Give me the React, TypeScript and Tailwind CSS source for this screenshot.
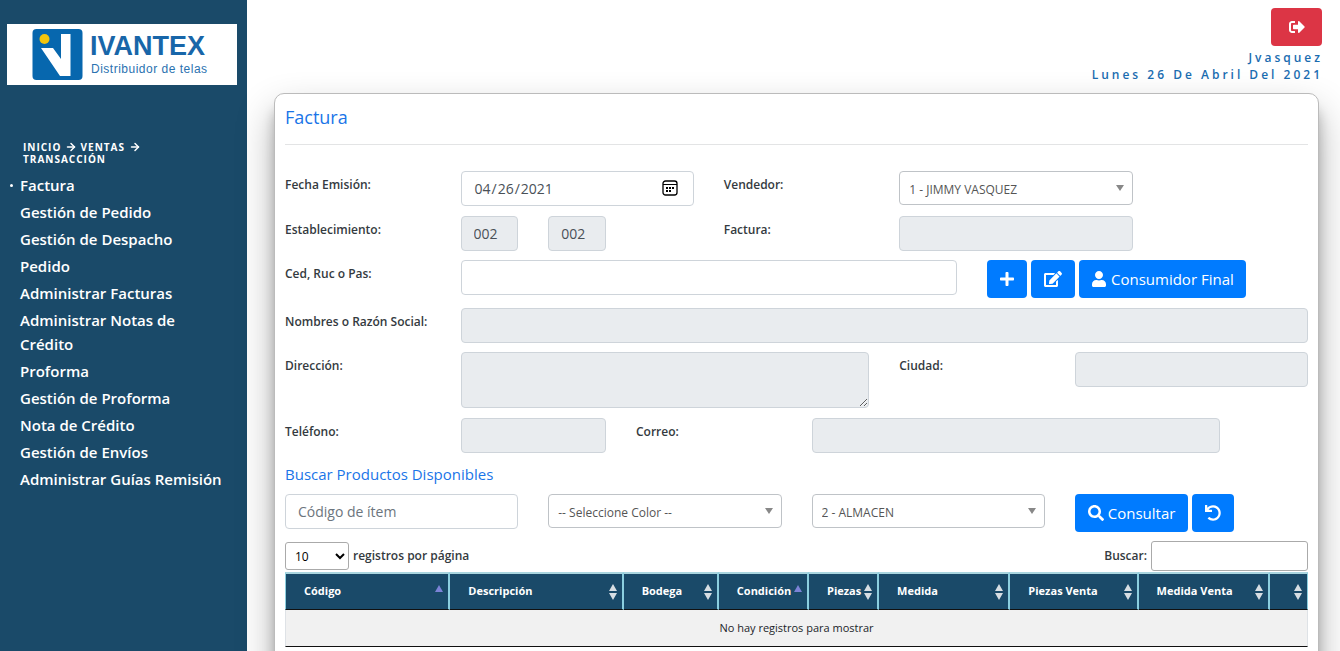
import { useState } from "react";
import type { ReactNode } from "react";
import { FaEdit, FaPlus, FaSearch, FaSignOutAlt, FaUndo, FaUser } from "react-icons/fa";
import { ArrowRight } from "lucide-react";
import clsx from "clsx";

const MENU = [
  "Factura",
  "Gestión de Pedido",
  "Gestión de Despacho",
  "Pedido",
  "Administrar Facturas",
  "Administrar Notas de Crédito",
  "Proforma",
  "Gestión de Proforma",
  "Nota de Crédito",
  "Gestión de Envíos",
  "Administrar Guías Remisión",
];

type Sort = "asc" | "both";

const COLUMNS: { label: string; width: string; sort: Sort }[] = [
  { label: "Código", width: "w-[165px]", sort: "asc" },
  { label: "Descripción", width: "w-[173px]", sort: "both" },
  { label: "Bodega", width: "w-[95px]", sort: "both" },
  { label: "Condición", width: "w-[90px]", sort: "asc" },
  { label: "Piezas", width: "w-[70px]", sort: "both" },
  { label: "Medida", width: "w-[131px]", sort: "both" },
  { label: "Piezas Venta", width: "w-[128px]", sort: "both" },
  { label: "Medida Venta", width: "w-[131px]", sort: "both" },
  { label: "", width: "w-[38px]", sort: "both" },
];

const field =
  "block h-[35px] w-full rounded border border-[#ced4da] bg-white px-3 text-sm text-[#495057] placeholder:text-[#6c757d] disabled:bg-[#e9ecef] disabled:opacity-100";
const button =
  "inline-flex h-[38px] items-center justify-center gap-1 rounded bg-[#007bff] text-[15px] text-white hover:bg-[#0069d9]";

function Logo() {
  return (
    <svg viewBox="0 0 230 61" className="block w-full bg-white" role="img" aria-label="Ivantex">
      <rect x="25.500" y="5" width="50" height="51" rx="4" fill="#0767ae" />
      <path d="M34 24 L46 24 L54 35 L54 10 L63.500 10 L63.500 52 L53 52 Z" fill="#fff" />
      <circle cx="37.500" cy="15" r="5" fill="#f3c50c" />
      <text x="83" y="31" fontSize="27" fontWeight="700" fontFamily="Liberation Sans, Arial, sans-serif" fill="#1866a9">
        IVANTEX
      </text>
      <text x="84" y="49" fontSize="12" fontFamily="Liberation Sans, Arial, sans-serif" letterSpacing="0.5" fill="#2a72b0">
        Distribuidor de telas
      </text>
    </svg>
  );
}

function Sidebar() {
  return (
    <aside className="w-[247px] shrink-0 bg-[#1a4a69] text-white">
      <div className="pt-6 pr-[10px] pl-[7px]">
        <Logo />
      </div>
      <nav>
        <div className="mt-14 px-[23px] text-[10px] leading-3 font-bold tracking-[1px] uppercase">
          Inicio <ArrowRight className="inline h-3 w-3 align-[-2px]" strokeWidth={3} /> Ventas{" "}
          <ArrowRight className="inline h-3 w-3 align-[-2px]" strokeWidth={3} /> Transacción
        </div>
        <ul className="mt-2 px-5">
          {MENU.map((item, i) => (
            <li key={item} className="relative mb-[3px] text-[15px] leading-6 font-semibold">
              {i === 0 && <span className="absolute top-[11px] -left-[10px] h-[3px] w-[3px] rounded-full bg-white" />}
              <a href="#">{item}</a>
            </li>
          ))}
        </ul>
      </nav>
    </aside>
  );
}

function Label({ htmlFor, className, children }: { htmlFor: string; className?: string; children: ReactNode }) {
  return (
    <label
      htmlFor={htmlFor}
      className={clsx("pt-1 text-xs leading-5 font-semibold whitespace-nowrap text-[#343a40]", className)}
    >
      {children}
    </label>
  );
}

function CalendarIcon() {
  return (
    <svg viewBox="0 0 16 16" className="pointer-events-none absolute top-[9px] right-4 h-4 w-4" fill="none" stroke="#000">
      <rect x="1" y="1" width="14" height="14" rx="2.500" strokeWidth="1.300" />
      <path d="M1 4.500h14" />
      <path d="M4 8h2M7 8h2M10 8h2M4 11h2M7 11h2" strokeWidth="2" />
    </svg>
  );
}

function Dropdown({ label, options }: { label: string; options: string[] }) {
  return (
    <div className="relative">
      <select
        id={label}
        aria-label={label}
        className="block h-[34px] w-full appearance-none rounded border border-[#bfc3c7] bg-white pt-[3px] pr-6 pl-[9px] text-xs text-[#555]"
      >
        {options.map((o) => (
          <option key={o}>{o}</option>
        ))}
      </select>
      <svg viewBox="0 0 8 6" className="pointer-events-none absolute top-[14px] right-[9px] h-[6px] w-2" fill="#888">
        <path d="M0 0h8L4 6z" />
      </svg>
    </div>
  );
}

function SortIcon({ sort }: { sort: Sort }) {
  return (
    <svg viewBox="0 0 8 16" className="absolute top-[10px] right-[5px] h-4 w-2">
      {sort === "asc" ? (
        <path d="M0 8L4 1l4 7z" fill="#7c83d6" />
      ) : (
        <path d="M0 7L4 0l4 7zM0 9h8l-4 7z" fill="#d7dee3" />
      )}
    </svg>
  );
}

function Row({ className, children }: { className?: string; children: ReactNode }) {
  return <div className={clsx("grid grid-cols-12 gap-x-[30px]", className)}>{children}</div>;
}

function ProductTable() {
  return (
    <table className="w-full table-fixed border-separate border-spacing-0">
      <thead>
        <tr className="h-[38px] bg-[#1a4a69] text-left text-[11px] text-white">
          {COLUMNS.map((c, i) => (
            <th
              key={i}
              aria-label={c.label || "Acciones"}
              className={clsx(
                "relative border-t-2 border-r-2 border-b border-t-[#a9d5df] border-r-[#8ccfdf] border-b-[#111] p-0 pl-[18px] font-bold whitespace-nowrap first:border-l first:border-l-[#8ccfdf] last:border-r",
                c.width,
              )}
            >
              {c.label}
              <SortIcon sort={c.sort} />
            </th>
          ))}
        </tr>
      </thead>
      <tbody>
        <tr className="h-[37px] bg-[#f1f1f1] text-center text-[11px] text-[#212529]">
          <td colSpan={COLUMNS.length} className="border-x border-b border-x-[#dee2e6] border-b-[#111] p-0">
            No hay registros para mostrar
          </td>
        </tr>
      </tbody>
    </table>
  );
}

export default function App() {
  const [date, setDate] = useState("2021-04-26");

  return (
    <div className="flex min-h-screen bg-white font-['Open_Sans',sans-serif]">
      <Sidebar />
      <main className="min-w-0 flex-1 pr-[21px] pb-10 pl-[27px]">
        <header className="-mr-1 flex flex-col items-end pt-2 text-right">
          <button
            type="button"
            aria-label="Salir"
            className="mr-px flex h-[38px] w-[51px] items-center justify-center rounded bg-[#dc3545] text-white"
          >
            <FaSignOutAlt className="h-4 w-4" />
          </button>
          <div className="mt-[3px] text-xs leading-[17px] font-semibold tracking-[3px] text-[#1a6cb0]">
            <p>Jvasquez</p>
            <p>Lunes 26 De Abril Del 2021</p>
          </div>
        </header>

        <section className="mt-[10px] rounded-[10px] border border-[#bbb] bg-white px-[10px] pb-10 shadow-[0_19px_38px_rgba(0,0,0,0.3),0_15px_12px_rgba(0,0,0,0.22)]">
          <h1 className="pt-[11px] text-lg leading-6 font-medium text-[#1a75e8]">Factura</h1>
          <hr className="mt-[15px] mb-[26px] border-[#e3e4e5]" />

          <form onSubmit={(e) => e.preventDefault()}>
            <Row className="mb-[10px]">
              <Label htmlFor="fecha" className="col-span-2">Fecha Emisión:</Label>
              <div className="relative col-span-3">
                <input
                  id="fecha"
                  type="date"
                  value={date}
                  onChange={(e) => setDate(e.target.value)}
                  className={clsx(field, "[&::-webkit-calendar-picker-indicator]:opacity-0")}
                />
                <CalendarIcon />
              </div>
              <Label htmlFor="Vendedor" className="col-span-2">Vendedor:</Label>
              <div className="col-span-3">
                <Dropdown label="Vendedor" options={["1 - JIMMY VASQUEZ"]} />
              </div>
            </Row>

            <Row className="mb-[9px]">
              <Label htmlFor="establecimiento" className="col-span-2">Establecimiento:</Label>
              <input id="establecimiento" disabled defaultValue="002" className={field} />
              <input aria-label="Punto de emisión" disabled defaultValue="002" className={field} />
              <span />
              <Label htmlFor="factura" className="col-span-2">Factura:</Label>
              <input id="factura" disabled className={clsx(field, "col-span-3")} />
            </Row>

            <Row className="mb-[10px]">
              <Label htmlFor="cedula" className="col-span-2">Ced, Ruc o Pas:</Label>
              <input id="cedula" className={clsx(field, "col-span-6")} />
              <div className="col-span-4 flex gap-1">
                <button type="button" aria-label="Agregar" className={clsx(button, "w-10")}>
                  <FaPlus className="h-4 w-4" />
                </button>
                <button type="button" aria-label="Editar" className={clsx(button, "w-11")}>
                  <FaEdit className="h-4 w-[18px]" />
                </button>
                <button type="button" className={clsx(button, "px-3 whitespace-nowrap")}>
                  <FaUser className="h-4 w-4" />
                  Consumidor Final
                </button>
              </div>
            </Row>

            <Row className="mb-[9px]">
              <Label htmlFor="nombres" className="col-span-2">Nombres o Razón Social:</Label>
              <input id="nombres" disabled className={clsx(field, "col-span-10")} />
            </Row>

            <Row className="mb-[10px]">
              <Label htmlFor="direccion" className="col-span-2">Dirección:</Label>
              <textarea
                id="direccion"
                disabled
                className="col-span-5 block h-14 w-full resize rounded border border-[#ced4da] bg-[#e9ecef]"
              />
              <Label htmlFor="ciudad" className="col-span-2">Ciudad:</Label>
              <input id="ciudad" disabled className={clsx(field, "col-span-3")} />
            </Row>

            <Row>
              <Label htmlFor="telefono" className="col-span-2">Teléfono:</Label>
              <input id="telefono" disabled className={clsx(field, "col-span-2")} />
              <Label htmlFor="correo" className="col-span-2">Correo:</Label>
              <input id="correo" disabled className={clsx(field, "col-span-5")} />
            </Row>

            <h2 className="mt-[9px] mb-2 text-[15px] leading-6 font-medium text-[#1a75e8]">
              Buscar Productos Disponibles
            </h2>

            <Row className="mb-[9px]">
              <input aria-label="Código de ítem" placeholder="Código de ítem" className={clsx(field, "col-span-3")} />
              <div className="col-span-3">
                <Dropdown label="Color" options={["-- Seleccione Color --"]} />
              </div>
              <div className="col-span-3">
                <Dropdown label="Bodega" options={["2 - ALMACEN"]} />
              </div>
              <div className="col-span-3 flex gap-1">
                <button type="submit" className={clsx(button, "px-[13px]")}>
                  <FaSearch className="h-4 w-4" />
                  Consultar
                </button>
                <button type="button" aria-label="Limpiar" className={clsx(button, "w-[42px]")}>
                  <FaUndo className="h-4 w-4" />
                </button>
              </div>
            </Row>
          </form>

          <div className="mb-px flex items-center justify-between text-xs font-semibold text-[#343a40]">
            <label className="flex items-center gap-1">
              <select className="h-7 w-16 rounded-[3px] border border-[#aaa] bg-white px-[5px] font-normal text-black">
                <option>10</option>
                <option>25</option>
                <option>50</option>
              </select>
              registros por página
            </label>
            <label className="flex items-center gap-1">
              Buscar:
              <input type="search" className="h-[30px] w-[157px] rounded-[3px] border border-[#aaa] bg-white px-1 font-normal" />
            </label>
          </div>

          <ProductTable />
        </section>
      </main>
    </div>
  );
}
